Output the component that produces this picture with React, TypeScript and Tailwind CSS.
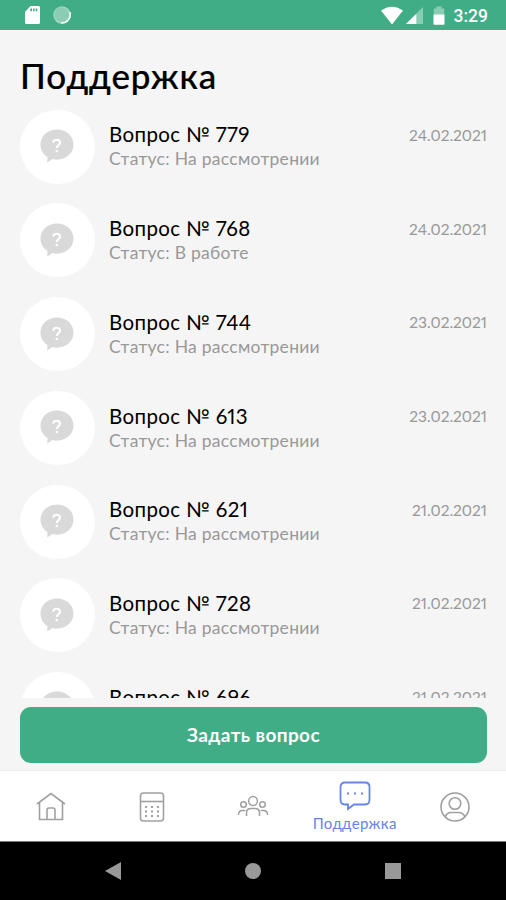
import React from 'react';

interface Question {
  id: number;
  status: string;
  date: string;
}

const questions: Question[] = [
  { id: 779, status: 'На рассмотрении', date: '24.02.2021' },
  { id: 768, status: 'В работе', date: '24.02.2021' },
  { id: 744, status: 'На рассмотрении', date: '23.02.2021' },
  { id: 613, status: 'На рассмотрении', date: '23.02.2021' },
  { id: 621, status: 'На рассмотрении', date: '21.02.2021' },
  { id: 728, status: 'На рассмотрении', date: '21.02.2021' },
  { id: 696, status: 'На рассмотрении', date: '21.02.2021' },
];

const StatusBar = () => (
  <header className="flex h-[30px] shrink-0 items-center justify-between bg-[#41ad86] pl-6 pr-[18px] text-white">
    <div className="flex items-center gap-[12px]">
      <svg width="17" height="20" viewBox="0 0 17 20">
        <path fillRule="evenodd" fill="currentColor" d="M6.5 1H14.5A1.5 1.5 0 0 1 16 2.5V17.5A1.5 1.5 0 0 1 14.5 19H2.5A1.5 1.5 0 0 1 1 17.5V7ZM6.3 3.5V6.3H8V3.5ZM9 3.5V6.3H10.6V3.5ZM11.6 3.5V6.3H13.2V3.5Z" />
      </svg>
      <svg width="18" height="18" viewBox="0 0 18 18">
        <circle cx="9" cy="9" r="8.7" fill="#a3d7c4" />
        <path d="M16.8 6A8.2 8.2 0 0 1 8 16.9" fill="none" stroke="#fff" strokeWidth="1.3" />
        <circle cx="8.5" cy="8.5" r="7.2" fill="#8acdb4" />
      </svg>
    </div>
    <div className="flex items-center">
      <svg width="22" height="19" viewBox="0 0 22 19" className="mr-[3px]">
        <path d="M0 4.5Q11 -3.2 22 4.5L11 18.5Z" fill="currentColor" />
      </svg>
      <svg width="17" height="17" viewBox="0 0 17 17" className="mr-2.5">
        <path d="M17 0V17H0Z" fill="#8acdb4" />
        <path d="M10.3 6.7V17H0Z" fill="currentColor" />
      </svg>
      <svg width="12" height="19" viewBox="0 0 12 19" className="mr-[9px]">
        <path d="M3.5 0.5H8.5V2.5H11.2V9H0.8V2.5H3.5Z" fill="#8acdb4" />
        <path d="M0.5 8.5H11.5V18Q11.5 18.7 10.8 18.7H1.2Q0.5 18.7 0.5 18Z" fill="currentColor" />
      </svg>
      <span className="pt-0.5 font-['Roboto',sans-serif] text-[17.5px] font-medium leading-5">3:29</span>
    </div>
  </header>
);

const QuestionIcon = () => (
  <svg width="34" height="34" viewBox="0 0 34 34">
    <path d="M17 0.5C26.3 0.5 33.5 7 33.5 15.6C33.5 24 26.3 30.7 17 30.7C15.2 30.7 13.8 30.5 12.4 30.1L7.2 33.6L7.5 28.1C3.1 25.4 0.5 21 0.5 15.6C0.5 7 7.7 0.5 17 0.5Z" fill="#d9d9d9" />
    <path d="M13.3 13.8C13.4 9.8 20 9.9 20 13.7C20 16.3 16.8 16 16.8 19" fill="none" stroke="#fff" strokeWidth="2" />
    <circle cx="16.8" cy="22" r="1.3" fill="#fff" />
  </svg>
);

const QuestionRow = ({ id, status, date }: Question) => (
  <li className="flex h-[93.7px] shrink-0 items-start">
    <div className="flex h-[74px] w-[75px] shrink-0 items-center justify-center rounded-full bg-white pb-px pr-[2px]">
      <QuestionIcon />
    </div>
    <div className="ml-[14px] flex-1 pt-[11.7px]">
      <p className="whitespace-nowrap text-[20.5px] leading-[26px] tracking-[0.38px] text-black proportional-nums">Вопрос № {id}</p>
      <p className="whitespace-nowrap text-[17.5px] leading-6 tracking-[0.28px] text-[#999999]">Статус: {status}</p>
    </div>
    <time className="mt-[15.2px] text-[15.5px] leading-5 text-[#999999] proportional-nums">{date}</time>
  </li>
);

const TabBar = () => (
  <nav className="grid h-[71px] shrink-0 grid-cols-5 items-center border-t border-[#ececec] bg-white pt-[3px] text-[#a0a0a0]">
    <svg className="mx-auto" width="30" height="30" viewBox="0 0 30 30" fill="none" stroke="currentColor" strokeWidth="1.6">
      <path d="M1 12L15 1.5L29 12M3.5 10.5V27.5H26.5V10.5M11 27.5V18Q11 16 13 16H17Q19 16 19 18V27.5" />
    </svg>
    <svg className="mx-auto" width="26" height="30" viewBox="0 0 26 30" fill="none" stroke="currentColor" strokeWidth="1.6">
      <rect x="1.5" y="1" width="23" height="28" rx="3" />
      <path d="M1.5 9.5H24.5" />
      <path d="M6 15H20M6 19.5H20M6 24H20" strokeWidth="2" strokeDasharray="2 4" />
    </svg>
    <svg className="mx-auto" width="32" height="24" viewBox="0 0 32 24" fill="none" stroke="currentColor" strokeWidth="1.5">
      <circle cx="16" cy="6" r="4.4" />
      <circle cx="6.5" cy="9.5" r="2.8" />
      <circle cx="25.5" cy="9.5" r="2.8" />
      <path d="M9.5 21V18Q9.5 13.5 14 13.5H18Q22.5 13.5 22.5 18V21M1.5 20Q1.5 15.5 5.5 15.5H8.5M30.5 20Q30.5 15.5 26.5 15.5H23.5" />
    </svg>
    <div className="flex flex-col items-center pl-px text-[#6585e9]">
      <svg width="32" height="30" viewBox="0 0 32 30" fill="none" stroke="currentColor" strokeWidth="1.8">
        <path d="M6 1.5H26Q30.5 1.5 30.5 6V19Q30.5 23.5 26 23.5H15L9 28V23.5H6Q1.5 23.5 1.5 19V6Q1.5 1.5 6 1.5Z" />
        <path d="M8 12.5H24" strokeWidth="2" strokeDasharray="2 5" />
      </svg>
      <span className="whitespace-nowrap pt-px text-[15px] leading-[22px] tracking-[0.4px]">Поддержка</span>
    </div>
    <svg className="mx-auto" width="30" height="30" viewBox="0 0 30 30" fill="none" stroke="currentColor" strokeWidth="1.6">
      <circle cx="15" cy="15" r="14" />
      <circle cx="15" cy="11.5" r="5.8" />
      <path d="M5 24.8Q7 20.5 11 20.5H19Q23 20.5 25 24.8" />
    </svg>
  </nav>
);

const SystemNav = () => (
  <footer className="flex h-[59px] shrink-0 items-center justify-center gap-[124px] border-t border-[#777] bg-black">
    <svg width="16" height="18" viewBox="0 0 16 18">
      <path d="M16 0V18L0 9Z" fill="#999" />
    </svg>
    <span className="size-4 rounded-full bg-[#999]" />
    <span className="size-4 bg-[#999]" />
  </footer>
);

const App = () => {
  return (
    <div className="flex h-[900px] w-[506px] flex-col overflow-hidden bg-[#f5f5f5] font-['Lato',sans-serif]">
      <StatusBar />
      <h1 className="h-[79.8px] shrink-0 pl-5 pt-[22px] text-[35px] font-medium leading-[46px] tracking-[0.9px] text-black [-webkit-text-stroke:0.2px_black]">Поддержка</h1>
      <ul className="flex h-[588.2px] shrink-0 flex-col overflow-hidden pl-5 pr-[19px]">
        {questions.map((question) => (
          <QuestionRow key={question.id} {...question} />
        ))}
      </ul>
      <div className="h-[72px] shrink-0 pl-5 pr-[19px] pt-[9px]">
        <button className="h-14 w-full rounded-[11px] bg-[#41ad86] text-[19px] font-bold tracking-[0.4px] text-white">Задать вопрос</button>
      </div>
      <TabBar />
      <SystemNav />
    </div>
  );
};

export default App;
